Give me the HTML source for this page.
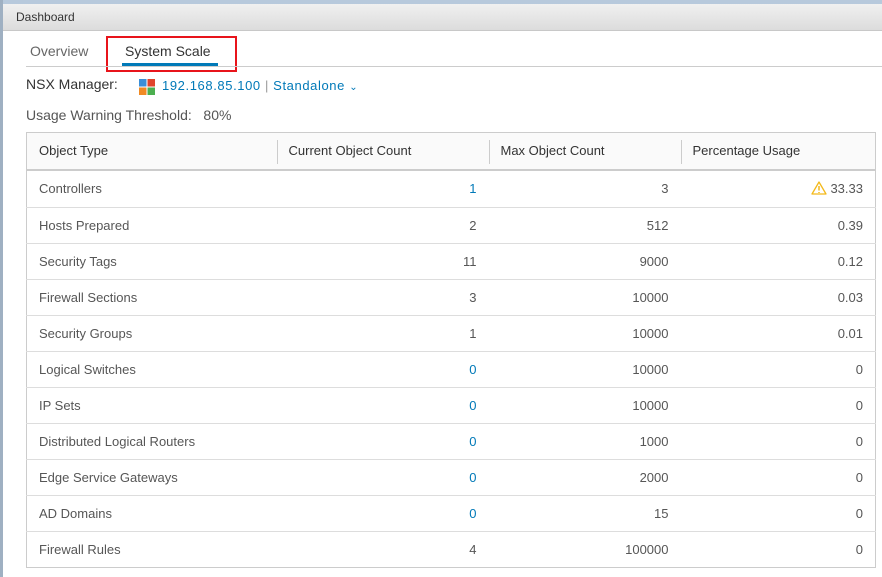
<!DOCTYPE html>
<html><head><style>
*{box-sizing:border-box;margin:0;padding:0}
body{width:882px;height:577px;overflow:hidden;background:#fff;font-family:"Liberation Sans",sans-serif;color:#565656;position:relative}
.lb{position:absolute;left:0;top:0;width:3px;height:577px;background:#9fb0c2}
.tb{position:absolute;left:0;top:0;width:882px;height:4px;background:#b7c9dc}
.hdr{position:absolute;left:3px;top:4px;width:879px;height:27px;background:linear-gradient(#f0f0f0,#dcdcdc);border-bottom:1px solid #c8c8c8;font-size:12px;color:#333;padding:6px 0 0 13px}
.tabs{position:absolute;left:26px;top:66px;width:856px;border-top:1px solid #ccc}
.t{position:absolute;font-size:14px}
.red{position:absolute;left:106px;top:36px;width:131px;height:36px;border:2px solid #e8141b}
.ul{position:absolute;left:122px;top:63px;width:96px;height:3px;background:#0079b8}
table{position:absolute;left:26px;top:132px;width:850px;border-collapse:collapse;border:1px solid #ccc;font-size:13px}
th{height:37px;background:#fafafa;text-align:left;font-weight:normal;color:#333;padding-left:12px;border-bottom:2px solid #ccc;position:relative}
th+th:before{content:"";position:absolute;left:0;top:7px;height:24px;border-left:1px solid #ccc}
td{height:36px;border-top:1px solid #ddd;padding:0 12px;color:#565656}
tr.f td{height:38px}
td.n{text-align:right}
.b{color:#0079b8}
</style></head><body>
<div class="tb"></div><div class="lb"></div>
<div class="hdr">Dashboard</div>
<div class="t" style="left:30px;top:43px;color:#666">Overview</div>
<div class="t" style="left:125px;top:43px;color:#333">System Scale</div>
<div class="ul"></div><div class="red"></div>
<div class="tabs"></div>
<div class="t" style="left:26px;top:76px;color:#333">NSX Manager:</div>
<svg style="position:absolute;left:139px;top:79px" width="16" height="16"><rect x="0" y="0" width="8" height="8" fill="#3a8fd8"/><rect x="8" y="0" width="8" height="8" fill="#e0442c"/><rect x="0" y="8" width="8" height="8" fill="#f08a24"/><rect x="8" y="8" width="8" height="8" fill="#4caf50"/><path d="M0 8H16M8 0V16" stroke="#fff"/></svg>
<div class="t" style="left:162px;top:78px;color:#0079b8;font-size:13px;letter-spacing:.6px">192.168.85.100 <span style="color:#999">|</span> Standalone <span style="font-size:10px">⌄</span></div>
<div class="t" style="left:26px;top:107px;color:#555">Usage Warning Threshold:&nbsp;&nbsp;&nbsp;80%</div>
<table>
<tr><th style="width:250px">Object Type</th><th style="width:212px">Current Object Count</th><th style="width:192px">Max Object Count</th><th>Percentage Usage</th></tr>
<tr class="f"><td>Controllers</td><td class="n b">1</td><td class="n">3</td><td class="n"><svg width="16" height="14" style="vertical-align:-2px"><path d="M8 1L15 13H1Z" fill="none" stroke="#f3b91b" stroke-width="1.3" stroke-linejoin="round"/><path d="M8 5V9.5M8 11V12" stroke="#f3b91b" stroke-width="1.5"/></svg> 33.33</td></tr>
<tr><td>Hosts Prepared</td><td class="n">2</td><td class="n">512</td><td class="n">0.39</td></tr>
<tr><td>Security Tags</td><td class="n">11</td><td class="n">9000</td><td class="n">0.12</td></tr>
<tr><td>Firewall Sections</td><td class="n">3</td><td class="n">10000</td><td class="n">0.03</td></tr>
<tr><td>Security Groups</td><td class="n">1</td><td class="n">10000</td><td class="n">0.01</td></tr>
<tr><td>Logical Switches</td><td class="n b">0</td><td class="n">10000</td><td class="n">0</td></tr>
<tr><td>IP Sets</td><td class="n b">0</td><td class="n">10000</td><td class="n">0</td></tr>
<tr><td>Distributed Logical Routers</td><td class="n b">0</td><td class="n">1000</td><td class="n">0</td></tr>
<tr><td>Edge Service Gateways</td><td class="n b">0</td><td class="n">2000</td><td class="n">0</td></tr>
<tr><td>AD Domains</td><td class="n b">0</td><td class="n">15</td><td class="n">0</td></tr>
<tr><td>Firewall Rules</td><td class="n">4</td><td class="n">100000</td><td class="n">0</td></tr>
</table>
</body></html>
